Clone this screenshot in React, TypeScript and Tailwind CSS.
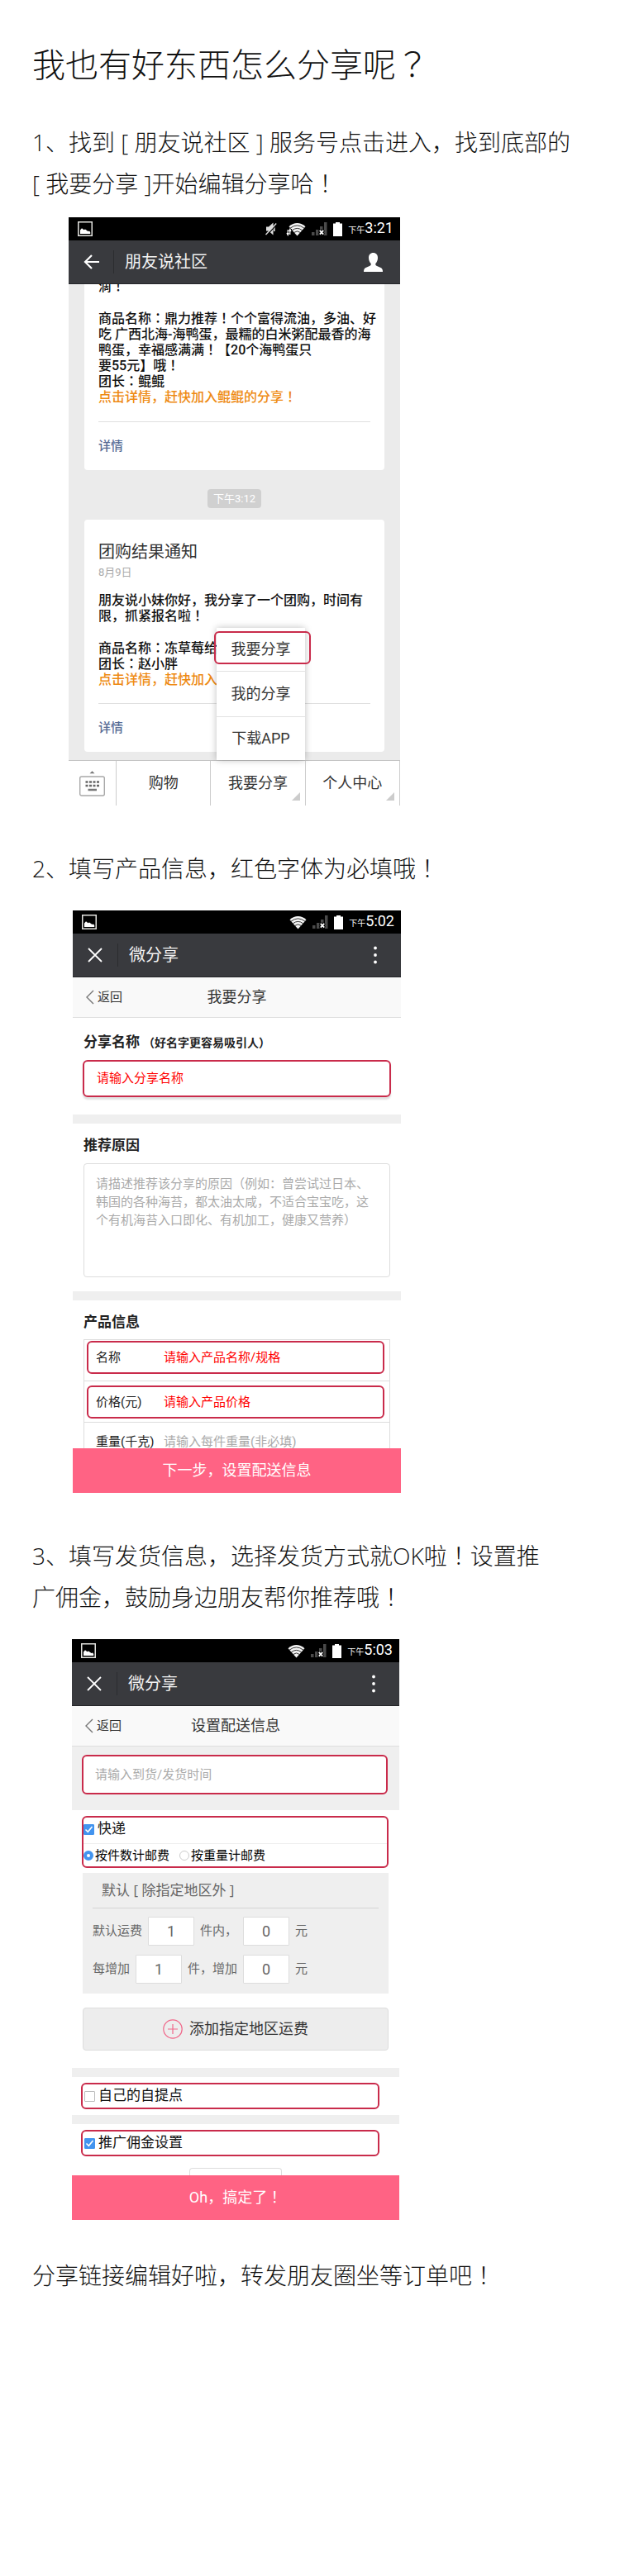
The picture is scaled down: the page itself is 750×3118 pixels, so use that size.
import { Fragment } from "react";
import type { ReactNode } from "react";

type ChildrenProps = { children: ReactNode };

/* Sets colons, exclamation and question marks in the middle of their cell. */
function Zh({ text }: { text: string }) {
  return (
    <>
      {text.split(/([：！？])/).map((part, index) =>
        /^[：！？]$/.test(part) ? (
          <span key={index} lang="zh-TW" className="leading-[0] font-['Noto_Sans_CJK_TC',sans-serif]">
            {part}
          </span>
        ) : (
          <Fragment key={index}>{part}</Fragment>
        ),
      )}
    </>
  );
}

function PictureIcon() {
  return (
    <svg viewBox="0 0 18 18" className="size-[18px]" fill="none" aria-hidden="true">
      <rect x="0.75" y="0.75" width="16.5" height="16.5" stroke="#e4e4e0" strokeWidth="1.5" />
      <path d="M3 15V10.5L5 8.3 7.5 10.2 9 9.4 12.5 12 14 11.6 15.2 13V15Z" fill="#fff" />
    </svg>
  );
}

function MuteIcon() {
  return (
    <svg viewBox="0 0 14 16" className="mr-1 h-4 w-[14px]" aria-hidden="true">
      <path d="M1 5.500H4L9.500 0.500V15.500L4 10.500H1Z" fill="#ddd" />
      <path d="M10.800 5V11" stroke="#ddd" strokeWidth="1.600" />
      <path d="M1.500 16L14 2.500" stroke="#000" strokeWidth="1.200" />
      <path d="M0.500 15L13.200 1.500" stroke="#ddd" strokeWidth="1.400" />
    </svg>
  );
}

function WifiIcon({ traffic = false }: { traffic?: boolean }) {
  return (
    <svg viewBox="0 0 24 17" className="h-[17px] w-6" fill="none" aria-hidden="true">
      <path d="M3.5 5.2Q13.5 -3 23.5 5.2L13.5 16.5Z" fill="#f4f4f4" />
      <path d="M5 7.2Q13.5 0.6 22 7.2M7.4 9.8Q13.5 5 19.6 9.8M9.8 12.4Q13.5 9.4 17.2 12.4" stroke="#000" strokeWidth="0.8" />
      {traffic && (
        <>
          <path d="M0 8H7V17H0Z" fill="#000" />
          <path d="M2.2 9V15M4.8 9V15M1 13L2.2 15.5 3.4 13M3.6 11L4.8 8.5 6 11" stroke="#fff" strokeWidth="1.2" />
        </>
      )}
    </svg>
  );
}

function SignalIcon() {
  return (
    <svg viewBox="0 0 19 16" className="h-4 w-[19px]" aria-hidden="true">
      <path d="M0 12H3.5V16H0ZM5 9H8.500V16H5ZM10 5H13.500V16H10ZM15 0H18.500V16H15Z" fill="#4a4a4a" />
      <path d="M9.500 9.500L14.500 15M14.500 9.500L9.500 15" stroke="#000" strokeWidth="4" />
      <path d="M9.800 9.800L14.200 14.700M14.200 9.800L9.800 14.700" stroke="#fff" strokeWidth="1.800" />
    </svg>
  );
}

function BatteryIcon() {
  return (
    <svg viewBox="0 0 11 17" className="h-[17px] w-[11px]" aria-hidden="true">
      <path d="M3 0H8V1.500H11V17H0V1.500H3Z" fill="#fff" />
    </svg>
  );
}

function StatusBar({ time, muted = false }: { time: string; muted?: boolean }) {
  return (
    <div className="flex h-7 items-center justify-between bg-black pr-2 pl-[11px] text-white">
      <PictureIcon />
      <div className="flex items-center gap-[7px]">
        {muted && <MuteIcon />}
        <WifiIcon traffic={muted} />
        <SignalIcon />
        <BatteryIcon />
        <span className="flex items-baseline leading-7">
          <span className="text-[10px]">下午</span>
          <span className="text-lg leading-7">{time}</span>
        </span>
      </div>
    </div>
  );
}

function AppBar({ title, left, right }: { title: string; left: ReactNode; right: ReactNode }) {
  return (
    <header className="flex h-[53px] items-center border-b border-[#242528] bg-[#393a3e] text-[#f2f2f2]">
      <div className="flex h-7 w-[55px] items-center border-r border-[#2b2c2f] pl-[18px]">{left}</div>
      <h2 className="flex-1 pl-[13px] text-xl">{title}</h2>
      {right}
    </header>
  );
}

function BackArrow() {
  return (
    <button type="button" aria-label="返回">
      <svg viewBox="0 0 20 18" className="h-[18px] w-5" fill="none" stroke="#fff" strokeWidth="2.200" aria-hidden="true">
        <path d="M19 9H2M10 1L2 9L10 17" />
      </svg>
    </button>
  );
}

function CloseButton() {
  return (
    <button type="button" aria-label="关闭">
      <svg viewBox="0 0 18 18" className="size-[18px]" stroke="#fff" strokeWidth="1.800" aria-hidden="true">
        <path d="M1 1L17 17M17 1L1 17" />
      </svg>
    </button>
  );
}

function MoreButton() {
  return (
    <button type="button" aria-label="更多" className="px-[29px]">
      <svg viewBox="0 0 4 22" className="h-[22px] w-1" fill="#fff" aria-hidden="true">
        <circle cx="2" cy="2.500" r="1.900" />
        <circle cx="2" cy="11" r="1.900" />
        <circle cx="2" cy="19.500" r="1.900" />
      </svg>
    </button>
  );
}

function ProfileButton() {
  return (
    <button type="button" aria-label="资料" className="px-[21px]">
      <svg viewBox="0 0 23 23" className="size-[23px]" fill="#fff" aria-hidden="true">
        <path d="M11.500 0C15 0 17 2.500 17 6C17 9 15.800 11.600 14.300 13C14 14.600 14.500 15.300 16 16L20.500 18C22.500 19 23 20.500 23 23H0C0 20.500 0.500 19 2.500 18L7 16C8.500 15.300 9 14.600 8.700 13C7.200 11.600 6 9 6 6C6 2.500 8 0 11.500 0Z" />
      </svg>
    </button>
  );
}

function KeyboardIcon() {
  return (
    <svg viewBox="0 0 31 31" className="size-[31px]" fill="none" aria-hidden="true">
      <path d="M12.500 3.200L15.500 0.300L18.500 3.200Z" fill="#777" />
      <rect x="0.700" y="7" width="29.600" height="23" rx="2" stroke="#a8a8a8" strokeWidth="1.400" />
      <path d="M7.500 13.500H24M7.500 18H24" stroke="#666" strokeWidth="2.500" strokeDasharray="3 1.500" />
      <path d="M10.500 23H21" stroke="#777" strokeWidth="2.500" />
    </svg>
  );
}

function SubNav({ title }: { title: string }) {
  return (
    <nav className="grid h-[49px] grid-cols-3 items-center border-b border-[#dedede] bg-[#f9f9f9] px-4 text-[#333]">
      <a href="#back" className="flex items-center gap-1 text-[15px]">
        <svg viewBox="0 0 10 18" className="h-[18px] w-[10px]" fill="none" stroke="#777" strokeWidth="1.400" aria-hidden="true">
          <path d="M9 1L1 9L9 17" />
        </svg>
        返回
      </a>
      <h3 className="flex justify-center text-lg whitespace-nowrap">{title}</h3>
    </nav>
  );
}

function Step({ lines }: { lines: string[] }) {
  return (
    <p className="px-[39px] font-['Open_Sans','Noto_Sans_CJK_SC',sans-serif] text-[28px] leading-[50px] font-light text-[#111]">
      {lines.map((line) => (
        <span key={line} className="block">
          <Zh text={line} />
        </span>
      ))}
    </p>
  );
}

function Divider() {
  return <div className="h-[11px] bg-[#efefef]" />;
}

function SubmitButton({ children }: ChildrenProps) {
  return (
    <button type="button" className="block h-[54px] w-full bg-[#ff6384] text-center text-lg text-white">
      {children}
    </button>
  );
}

function Check({ id, label, checked = false }: { id: string; label: string; checked?: boolean }) {
  return (
    <div className="flex h-7 items-center gap-1">
      <span className="grid place-items-center">
        <input
          id={id}
          type="checkbox"
          defaultChecked={checked}
          className="peer col-start-1 row-start-1 size-[13px] appearance-none rounded-[1px] border border-[#bbb] bg-white checked:border-[#4394ef] checked:bg-[#4394ef]"
        />
        <svg viewBox="0 0 13 13" className="pointer-events-none invisible col-start-1 row-start-1 size-[13px] peer-checked:visible" fill="none" stroke="#fff" strokeWidth="1.600" aria-hidden="true">
          <path d="M2.500 6.500L5.300 9.300L10.500 3" />
        </svg>
      </span>
      <label htmlFor={id} className="text-[17px] text-[#111]">
        {label}
      </label>
    </div>
  );
}

function Radio({ id, label, checked = false }: { id: string; label: string; checked?: boolean }) {
  return (
    <div className="flex items-center gap-[2px]">
      <input
        id={id}
        type="radio"
        name="postage"
        defaultChecked={checked}
        className="size-3 appearance-none rounded-full border border-[#ccc] bg-white checked:border-4 checked:border-[#4394ef]"
      />
      <label htmlFor={id} className="text-[15px] text-black">
        {label}
      </label>
    </div>
  );
}

function NumberBox({ label, value }: { label: string; value: string }) {
  return (
    <input
      type="text"
      aria-label={label}
      defaultValue={value}
      className="h-[35px] w-14 rounded-[1px] border border-[#ddd] bg-white text-center text-lg text-[#666] outline-none"
    />
  );
}

function DetailLink() {
  return (
    <div className="flex h-[59px] items-center border-t border-[#dfdfdf]">
      <a href="#detail" className="text-[15px] text-[#576b95]">
        详情
      </a>
    </div>
  );
}

function MessageLines({ lines }: { lines: string[] }) {
  return (
    <>
      {lines.map((line) => (
        <span key={line} className="block">
          <Zh text={line} />
        </span>
      ))}
    </>
  );
}

function ChatPhone() {
  return (
    <section className="ml-[83px] w-full max-w-[401px]">
      <StatusBar time="3:21" muted />
      <AppBar title="朋友说社区" left={<BackArrow />} right={<ProfileButton />} />
      <div className="relative">
        <div className="overflow-hidden bg-[#ebebeb] px-[19px] pb-[10px]">
          <article className="-mt-2 rounded-sm bg-white px-[17px] text-base leading-[19px] font-medium whitespace-nowrap text-[#111]">
            <p className="pt-px pb-5">
              <Zh text="滴！" />
            </p>
            <p>
              <MessageLines
                lines={[
                  "商品名称：鼎力推荐！个个富得流油，多油、好",
                  "吃 广西北海-海鸭蛋，最糯的白米粥配最香的海",
                  "鸭蛋，幸福感满满！【20个海鸭蛋只",
                  "要55元】哦！",
                  "团长：鲲鲲",
                ]}
              />
            </p>
            <p className="pb-5 text-[#ee8a12]">
              <Zh text="点击详情，赶快加入鲲鲲的分享！" />
            </p>
            <DetailLink />
          </article>
          <time className="mx-auto mt-[23px] mb-[14px] block h-[23px] w-[65px] rounded-sm bg-[#d0d0d0] text-center text-[13px] leading-[23px] text-white">
            下午3:12
          </time>
          <article className="rounded-sm bg-white px-[17px] pt-[25px] text-base leading-[19px] font-medium whitespace-nowrap text-[#111]">
            <h3 className="text-xl leading-7 font-normal text-[#333]">团购结果通知</h3>
            <p className="pb-[13px] text-[13px] leading-[22px] font-normal text-[#aaa]">8月9日</p>
            <p className="pb-5">
              <MessageLines lines={["朋友说小妹你好，我分享了一个团购，时间有", "限，抓紧报名啦！"]} />
            </p>
            <p>
              <MessageLines lines={["商品名称：冻草莓给你", "团长：赵小胖"]} />
            </p>
            <p className="pb-[19px] text-[#ee8a12]">点击详情，赶快加入赵</p>
            <DetailLink />
          </article>
        </div>
        <div className="absolute right-[115px] bottom-0 w-[107px] bg-white text-lg text-[#333] shadow-[0_0_8px_rgba(0,0,0,0.25)]">
          <button type="button" className="block h-[53px] w-full border-b border-[#e2e2e2]">
            我要分享
          </button>
          <button type="button" className="block h-[55px] w-full border-b border-[#e2e2e2]">
            我的分享
          </button>
          <button type="button" className="block h-[52px] w-full">
            下载APP
          </button>
          <div className="pointer-events-none absolute top-1 -right-[7px] -left-[3px] h-10 rounded-md border-2 border-[#c92b4b]" />
        </div>
      </div>
      <div className="grid h-[55px] grid-cols-[58px_1fr_1fr_1fr] border-t border-[#c4c4c4] text-lg text-[#333]">
        <button type="button" aria-label="键盘" className="flex items-center justify-center border-r border-[#ccc]">
          <KeyboardIcon />
        </button>
        <button type="button" className="border-r border-[#ccc]">
          购物
        </button>
        <button type="button" className="relative border-r border-[#ccc]">
          我要分享
          <CornerMark />
        </button>
        <button type="button" className="relative border-r border-[#ccc]">
          个人中心
          <CornerMark />
        </button>
      </div>
    </section>
  );
}

function CornerMark() {
  return (
    <svg viewBox="0 0 10 10" className="absolute right-[6px] bottom-[6px] size-[10px]" aria-hidden="true">
      <path d="M10 0V10H0Z" fill="#ccc" />
    </svg>
  );
}

const inputBase = "w-full bg-transparent text-[15px] outline-none";

function ProductPhone() {
  return (
    <section className="ml-[88px] w-full max-w-[397px] text-[#222]">
      <StatusBar time="5:02" />
      <AppBar title="微分享" left={<CloseButton />} right={<MoreButton />} />
      <SubNav title="我要分享" />
      <div className="px-3 pt-[17px] pb-[21px]">
        <label htmlFor="share-name" className="block pl-[1px] text-[17px] leading-6 font-bold">
          分享名称<span className="ml-1 text-sm">（好名字更容易吸引人）</span>
        </label>
        <div className="mt-[10px] flex h-[45px] items-center rounded-md border-2 border-[#c92b4b] px-[15px] shadow-[0_3px_2px_#e2e2e2]">
          <input id="share-name" placeholder="请输入分享名称" className={`${inputBase} placeholder:text-[#f00]`} />
        </div>
      </div>
      <Divider />
      <div className="px-[13px] pt-[14px] pb-[17px]">
        <label htmlFor="reason" className="block text-[17px] leading-6 font-bold">
          推荐原因
        </label>
        <textarea
          id="reason"
          placeholder="请描述推荐该分享的原因（例如：曾尝试过日本、韩国的各种海苔，都太油太咸，不适合宝宝吃，这个有机海苔入口即化、有机加工，健康又营养）"
          className="mt-[10px] block h-[138px] w-full resize-none rounded-sm border border-[#ddd] px-[14px] py-[13px] text-[15px] leading-[22px] outline-none placeholder:text-[#aaa]"
        />
      </div>
      <Divider />
      <div className="px-[13px] pt-[14px]">
        <h4 className="text-[17px] leading-6 font-bold">产品信息</h4>
        <div className="mt-[9px] border border-b-0 border-[#ddd] text-[15px]">
          <div className="h-[50px] border-b border-[#ddd] px-[3px] pt-[1px]">
            <div className="mr-[3px] flex h-10 items-center rounded-md border-2 border-[#c92b4b] pl-[9px]">
              <label htmlFor="name" className="w-[82px] shrink-0">
                名称
              </label>
              <input id="name" placeholder="请输入产品名称/规格" className={`${inputBase} placeholder:text-[#f00]`} />
            </div>
          </div>
          <div className="h-[50px] border-b border-[#ddd] px-[3px] pt-[5px]">
            <div className="mr-[3px] flex h-10 items-center rounded-md border-2 border-[#c92b4b] pl-[9px]">
              <label htmlFor="price" className="w-[82px] shrink-0">
                价格(元)
              </label>
              <input id="price" placeholder="请输入产品价格" className={`${inputBase} placeholder:text-[#f00]`} />
            </div>
          </div>
          <div className="h-[31px] overflow-hidden px-[14px]">
            <div className="flex h-[46px] items-center">
              <label htmlFor="weight" className="w-[82px] shrink-0">
                重量(千克)
              </label>
              <input id="weight" placeholder="请输入每件重量(非必填)" className={`${inputBase} placeholder:text-[#aaa]`} />
            </div>
          </div>
        </div>
      </div>
      <SubmitButton>下一步，设置配送信息</SubmitButton>
    </section>
  );
}

function DeliveryPhone() {
  return (
    <section className="ml-[87px] w-full max-w-[396px] text-[#222]">
      <StatusBar time="5:03" />
      <AppBar title="微分享" left={<CloseButton />} right={<MoreButton />} />
      <SubNav title="设置配送信息" />
      <div className="bg-[#efefef] px-3 pt-[10px] pb-[19px]">
        <div className="mr-[2px] flex h-12 items-center rounded-md border-2 border-[#c92b4b] bg-white px-[14px]">
          <input aria-label="到货/发货时间" placeholder="请输入到货/发货时间" className={`${inputBase} placeholder:text-[#aaa]`} />
        </div>
      </div>
      <div className="px-[13px] pt-[7px] pb-[21px]">
        <div className="-ml-[1px] h-[63px] rounded-md border-2 border-[#c92b4b]">
          <div className="border-b border-[#eee] pb-[3px]">
            <Check id="express" label="快递" checked />
          </div>
          <div className="flex h-7 items-center gap-3">
            <Radio id="by-count" label="按件数计邮费" checked />
            <Radio id="by-weight" label="按重量计邮费" />
          </div>
        </div>
        <div className="mt-[6px] h-[146px] bg-[#efefef] px-3 text-[15px] text-[#666]">
          <h4 className="border-b border-[#d5d5d5] pl-[11px] font-['Open_Sans','Noto_Sans_CJK_SC',sans-serif] text-[17px] leading-[42px]">
            默认 [ 除指定地区外 ]
          </h4>
          <div className="mt-[10px] flex items-center gap-[7px]">
            默认运费
            <NumberBox label="默认件数" value="1" />
            件内，
            <NumberBox label="默认运费" value="0" />元
          </div>
          <div className="mt-[11px] flex items-center gap-[7px]">
            每增加
            <NumberBox label="每增加件数" value="1" />
            件，增加
            <NumberBox label="增加运费" value="0" />元
          </div>
        </div>
        <button
          type="button"
          className="mt-[17px] flex h-[52px] w-full items-center justify-center gap-2 rounded-sm border border-[#ddd] bg-[#ededed] text-lg text-[#333]"
        >
          <svg viewBox="0 0 24 24" className="size-6" fill="none" stroke="#f0688a" strokeWidth="1.200" aria-hidden="true">
            <circle cx="12" cy="12" r="11.200" />
            <path d="M12 6V18M6 12H18" />
          </svg>
          添加指定地区运费
        </button>
      </div>
      <Divider />
      <div className="py-[7px] pr-6 pl-[11px]">
        <div className="h-8 rounded-md border-2 border-[#c92b4b] pl-[2px]">
          <Check id="pickup" label="自己的自提点" />
        </div>
      </div>
      <Divider />
      <div className="pt-[7px] pr-6 pl-[11px]">
        <div className="h-8 rounded-md border-2 border-[#c92b4b] pl-[2px]">
          <Check id="commission" label="推广佣金设置" checked />
        </div>
      </div>
      <div className="mx-auto mt-[14px] h-[9px] w-28 rounded-t-sm border border-b-0 border-[#ddd]" />
      <SubmitButton>
        <Zh text="Oh，搞定了！" />
      </SubmitButton>
    </section>
  );
}

export default function App() {
  return (
    <main
      lang="zh-CN"
      className="min-h-screen overflow-x-hidden bg-white pt-[50px] pb-20 font-['Roboto','Noto_Sans_CJK_SC',sans-serif] text-[#333]"
    >
      <h1 className="px-[39px] text-[40px] leading-[60px] font-light text-[#111]">
        <Zh text="我也有好东西怎么分享呢？" />
      </h1>
      <div className="pt-[37px] pb-4">
        <Step lines={["1、找到 [ 朋友说社区 ] 服务号点击进入，找到底部的", "[ 我要分享 ]开始编辑分享哈！"]} />
      </div>
      <ChatPhone />
      <div className="pt-[51px] pb-[26px]">
        <Step lines={["2、填写产品信息，红色字体为必填哦！"]} />
      </div>
      <ProductPhone />
      <div className="pt-[51px] pb-[26px]">
        <Step lines={["3、填写发货信息，选择发货方式就OK啦！设置推", "广佣金，鼓励身边朋友帮你推荐哦！"]} />
      </div>
      <DeliveryPhone />
      <div className="pt-[42px]">
        <Step lines={["分享链接编辑好啦，转发朋友圈坐等订单吧！"]} />
      </div>
    </main>
  );
}
